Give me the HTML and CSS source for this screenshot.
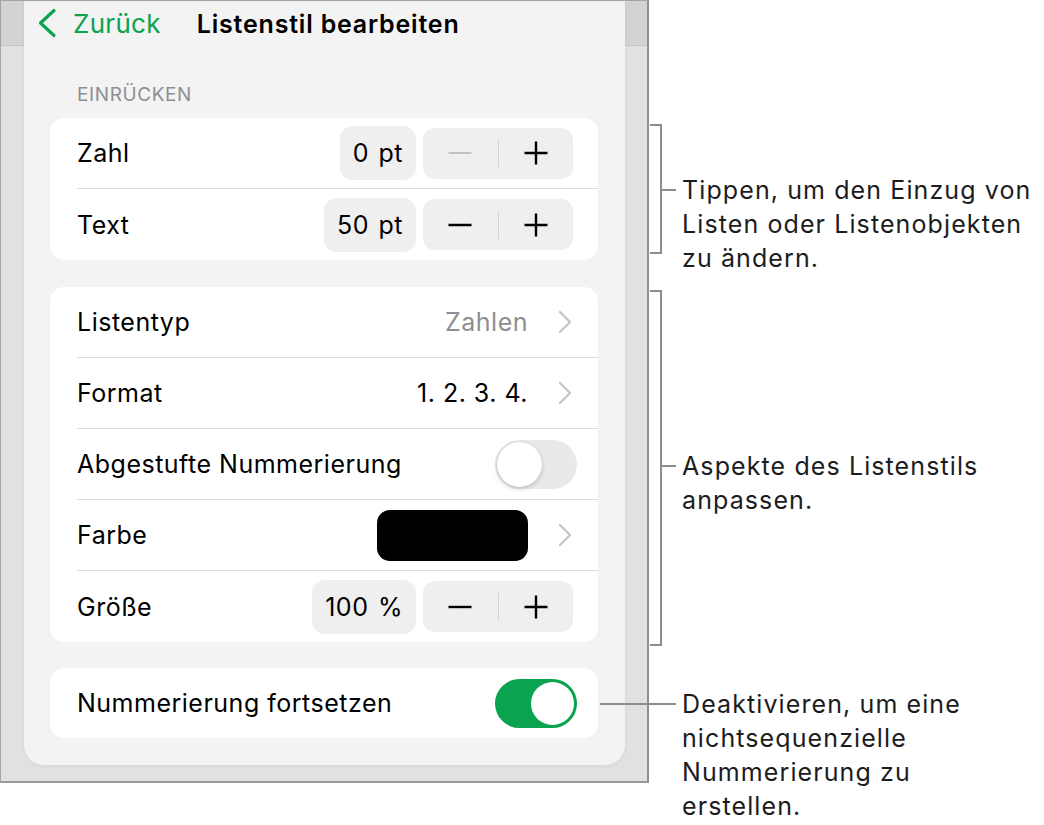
FILE: index.html
```html
<!DOCTYPE html>
<html lang="de">
<head>
    <meta charset="UTF-8">
    <meta name="viewport" content="width=device-width, initial-scale=1.0">
    <title>Listenstil bearbeiten</title>
    <link rel="stylesheet" href="styles.css">
</head>
<body>
<div class="figure">
    <div class="device">
        <div class="popover">
            <header class="nav">
                <a class="back" href="#">
                    <svg class="back-icon" width="20" height="30" viewBox="0 0 20 30">
                        <path d="M17 2.5L3.5 15L17 27.5" fill="none" stroke="currentColor" stroke-width="3.2" stroke-linecap="round" stroke-linejoin="round"/>
                    </svg>
                    <span>Zurück</span>
                </a>
                <h1>Listenstil bearbeiten</h1>
            </header>

            <p class="section-label">EINRÜCKEN</p>

            <div class="group">
                <div class="row">
                    <span class="label">Zahl</span>
                    <div class="controls">
                        <span class="value-box">0 pt</span>
                        <div class="stepper">
                            <span class="step is-disabled">
                                <svg width="24" height="24" viewBox="0 0 24 24"><path d="M0.5 12h23" stroke="currentColor" stroke-width="2.2"/></svg>
                            </span>
                            <span class="divider"></span>
                            <span class="step">
                                <svg width="24" height="24" viewBox="0 0 24 24"><path d="M12 0.5v23M0.5 12h23" stroke="currentColor" stroke-width="2.4"/></svg>
                            </span>
                        </div>
                    </div>
                </div>
                <div class="row">
                    <span class="label">Text</span>
                    <div class="controls">
                        <span class="value-box">50 pt</span>
                        <div class="stepper">
                            <span class="step">
                                <svg width="24" height="24" viewBox="0 0 24 24"><path d="M0.5 12h23" stroke="currentColor" stroke-width="2.4"/></svg>
                            </span>
                            <span class="divider"></span>
                            <span class="step">
                                <svg width="24" height="24" viewBox="0 0 24 24"><path d="M12 0.5v23M0.5 12h23" stroke="currentColor" stroke-width="2.4"/></svg>
                            </span>
                        </div>
                    </div>
                </div>
            </div>

            <div class="group group-style">
                <div class="row">
                    <span class="label">Listentyp</span>
                    <div class="controls disclosure">
                        <span class="value muted">Zahlen</span>
                        <svg class="chevron" width="14" height="24" viewBox="0 0 14 24"><path d="M2 2l10 10L2 22" fill="none" stroke="currentColor" stroke-width="2.2" stroke-linecap="round" stroke-linejoin="round"/></svg>
                    </div>
                </div>
                <div class="row">
                    <span class="label">Format</span>
                    <div class="controls disclosure">
                        <span class="value">1. 2. 3. 4.</span>
                        <svg class="chevron" width="14" height="24" viewBox="0 0 14 24"><path d="M2 2l10 10L2 22" fill="none" stroke="currentColor" stroke-width="2.2" stroke-linecap="round" stroke-linejoin="round"/></svg>
                    </div>
                </div>
                <div class="row">
                    <span class="label">Abgestufte Nummerierung</span>
                    <span class="toggle"><span class="knob"></span></span>
                </div>
                <div class="row">
                    <span class="label">Farbe</span>
                    <div class="controls disclosure">
                        <span class="swatch"></span>
                        <svg class="chevron" width="14" height="24" viewBox="0 0 14 24"><path d="M2 2l10 10L2 22" fill="none" stroke="currentColor" stroke-width="2.2" stroke-linecap="round" stroke-linejoin="round"/></svg>
                    </div>
                </div>
                <div class="row">
                    <span class="label">Größe</span>
                    <div class="controls">
                        <span class="value-box">100 %</span>
                        <div class="stepper">
                            <span class="step">
                                <svg width="24" height="24" viewBox="0 0 24 24"><path d="M0.5 12h23" stroke="currentColor" stroke-width="2.4"/></svg>
                            </span>
                            <span class="divider"></span>
                            <span class="step">
                                <svg width="24" height="24" viewBox="0 0 24 24"><path d="M12 0.5v23M0.5 12h23" stroke="currentColor" stroke-width="2.4"/></svg>
                            </span>
                        </div>
                    </div>
                </div>
            </div>

            <div class="group">
                <div class="row row-single">
                    <span class="label">Nummerierung fortsetzen</span>
                    <span class="toggle is-on"><span class="knob"></span></span>
                </div>
            </div>
        </div>
    </div>

    <div class="notes">
        <div class="note note-indent">
            <span class="bracket"></span>
            <span class="tick"></span>
            <p class="note-text">Tippen, um den Einzug von<br>Listen oder Listenobjekten<br>zu ändern.</p>
        </div>
        <div class="note note-style">
            <span class="bracket"></span>
            <span class="tick"></span>
            <p class="note-text">Aspekte des Listenstils<br>anpassen.</p>
        </div>
        <div class="note note-continue">
            <span class="leader"></span>
            <p class="note-text">Deaktivieren, um eine<br>nichtsequenzielle<br>Nummerierung zu<br>erstellen.</p>
        </div>
    </div>
</div>
</body>
</html>
```

FILE: styles.css
```css
:root {
    --green: #0aa34f;
    --text: #000000;
    --muted: #8e8e93;
    --control-bg: #efeff0;
    --separator: #dadadc;
    --callout: #8d8d8d;
    --font-body: 'Inter', 'Liberation Sans', sans-serif;
}

* {
    box-sizing: border-box;
    margin: 0;
    padding: 0;
}

body {
    font-family: var(--font-body);
    background-color: #ffffff;
    color: var(--text);
}

a {
    text-decoration: none;
    color: inherit;
}

.figure {
    display: flex;
    align-items: flex-start;
}

/* Screenshot frame */
.device {
    width: 649px;
    flex-shrink: 0;
    border: 1px solid #a3a3a3;
    border-right-width: 2px;
    border-bottom-width: 2px;
    border-right-color: #8f8f8f;
    border-bottom-color: #9a9a9a;
    padding: 0 22px 16px 23px;
    background: linear-gradient(#d3d3d3 0, #d3d3d3 44px, #c6c6c6 44px, #c6c6c6 45px, #e1e1e1 45px);
}

.popover {
    background-color: #f3f3f3;
    border-radius: 0 0 20px 20px;
    padding-bottom: 27px;
    box-shadow: 0 1px 4px rgba(0, 0, 0, 0.06);
}

.nav {
    height: 45px;
    display: flex;
    align-items: center;
    padding-left: 13px;
}

.back {
    display: flex;
    align-items: center;
    color: var(--green);
    font-size: 26px;
    letter-spacing: 0.3px;
}

.back-icon {
    margin-right: 16px;
    margin-top: -1px;
}

.nav h1 {
    font-size: 25px;
    font-weight: 600;
    margin-left: 36px;
    letter-spacing: 0.8px;
}

.section-label {
    margin: 38px 0 12px 53px;
    font-size: 19px;
    line-height: 22px;
    color: var(--muted);
    letter-spacing: 0.6px;
}

.group {
    margin: 0 27px 0 26px;
    background-color: #ffffff;
    border-radius: 14px;
    overflow: hidden;
}

.group + .group {
    margin-top: 27px;
}

.group-style + .group {
    margin-top: 26px;
}

.row {
    height: 71px;
    margin-left: 27px;
    padding-right: 21px;
    display: flex;
    align-items: center;
    justify-content: space-between;
    border-bottom: 1px solid var(--separator);
}

.row:last-child {
    border-bottom: none;
}

.row-single {
    height: 70px;
}

.label,
.value,
.value-box {
    font-size: 25px;
    letter-spacing: 0.5px;
}

.controls {
    display: flex;
    align-items: center;
    gap: 7px;
}

.controls.disclosure {
    gap: 30px;
}

.value.muted {
    color: var(--muted);
}

.chevron {
    color: #c4c4c7;
    margin-right: 5px;
}

.value-box {
    height: 54px;
    line-height: 54px;
    padding: 0 13px;
    border-radius: 13px;
    background-color: var(--control-bg);
    word-spacing: 2px;
}

.stepper {
    width: 150px;
    height: 51px;
    margin-right: 4px;
    border-radius: 12px;
    background-color: var(--control-bg);
    display: flex;
    align-items: center;
}

.step {
    flex: 1;
    height: 100%;
    display: flex;
    align-items: center;
    justify-content: center;
    color: #000000;
}

.step.is-disabled {
    color: #c2c2c4;
}

.divider {
    width: 1px;
    height: 28px;
    background-color: #d3d3d5;
}

.swatch {
    width: 151px;
    height: 51px;
    border-radius: 13px;
    background-color: #000000;
}

.toggle {
    width: 82px;
    height: 49px;
    border-radius: 25px;
    background-color: #e9e9eb;
    padding: 2px;
    display: flex;
}

.knob {
    width: 45px;
    height: 45px;
    border-radius: 50%;
    background-color: #ffffff;
    box-shadow: 0 2px 5px rgba(0, 0, 0, 0.18), 0 0 1px rgba(0, 0, 0, 0.15);
}

.toggle.is-on {
    background-color: var(--green);
    justify-content: flex-end;
    padding: 3px;
}

.toggle.is-on .knob {
    width: 43px;
    height: 43px;
    box-shadow: none;
}

/* Callouts */
.notes {
    display: flex;
    flex-direction: column;
    padding-top: 124px;
    margin-left: 1px;
}

.note {
    display: flex;
    align-items: flex-start;
}

.bracket {
    width: 12px;
    border: 2px solid var(--callout);
    border-left: none;
}

.tick,
.leader {
    height: 2px;
    background-color: var(--callout);
}

.tick {
    width: 14px;
}

.note-text {
    margin-left: 6px;
    font-size: 25px;
    line-height: 34px;
    letter-spacing: 1.1px;
    color: #1c1c1e;
    white-space: nowrap;
}

.note-indent .bracket {
    height: 130px;
}

.note-indent .tick {
    margin-top: 65px;
}

.note-indent .note-text {
    margin-top: 49px;
}

.note-style {
    margin-top: 15px;
}

.note-style .bracket {
    height: 356px;
}

.note-style .tick {
    margin-top: 175px;
}

.note-style .note-text {
    margin-top: 159px;
}

.note-continue {
    margin-top: 41px;
}

.note-continue .leader {
    width: 76px;
    margin-left: -50px;
    margin-top: 16px;
}
```
